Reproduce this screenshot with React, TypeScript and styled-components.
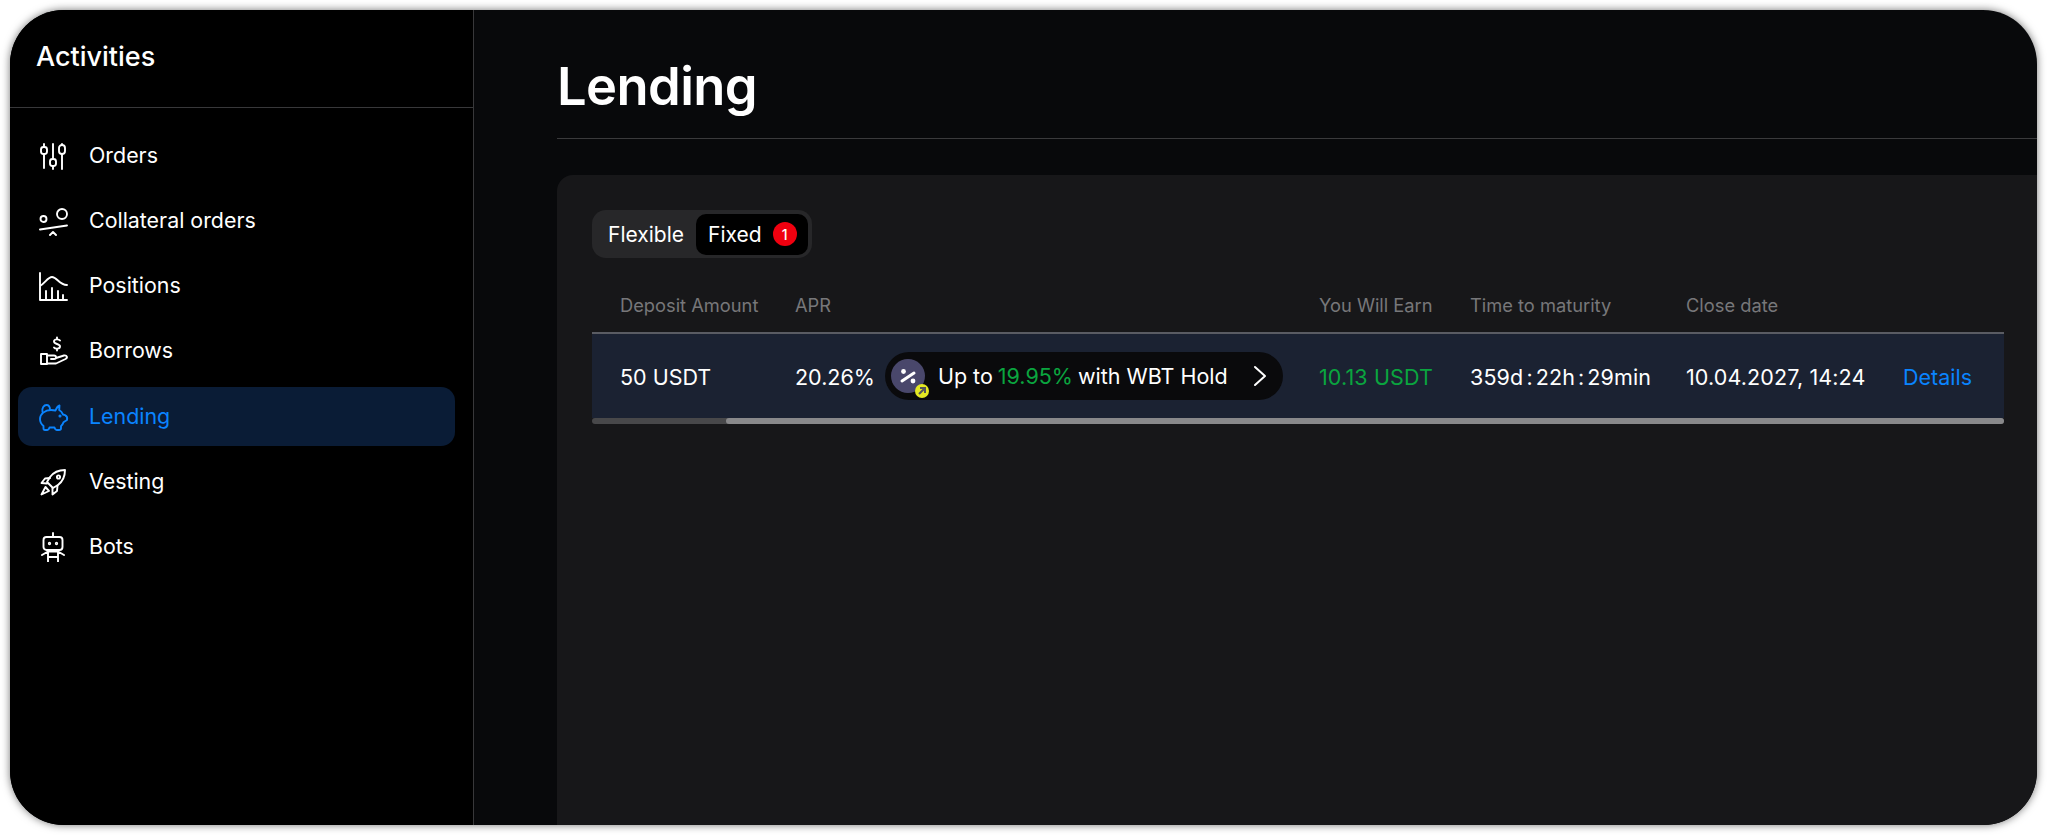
import React from "react";
import styled, { createGlobalStyle } from "styled-components";

const Global = createGlobalStyle`
  html, body { margin: 0; padding: 0; background: #fff; }
  body { font-family: Inter, "Liberation Sans", sans-serif; -webkit-font-smoothing: antialiased; }
  * { box-sizing: border-box; }
`;

const Page = styled.div`
  width: 2048px;
  height: 835px;
  padding: 10px 11px 10px 10px;
  overflow: hidden;
`;
const Frame = styled.div`
  display: flex;
  height: 100%;
  border-radius: 54px;
  overflow: hidden;
  background: #08090b;
  box-shadow: 0 0 9px rgba(0, 0, 0, 0.55);
`;
const Sidebar = styled.aside`
  width: 464px;
  flex: none;
  background: #000;
  border-right: 1px solid #38383a;
`;
const SidebarHead = styled.div`
  height: 98px;
  padding: 31px 0 0 26px;
  border-bottom: 1px solid #38383a;
  font-size: 27px;
  line-height: 32px;
  font-weight: 500;
  color: #fff;
`;
const Nav = styled.nav`
  display: flex;
  flex-direction: column;
  gap: 6.3px;
  padding: 18px 18px 0 8px;
`;
const NavItem = styled.div<{ $active?: boolean }>`
  display: flex;
  align-items: center;
  gap: 20px;
  height: 59px;
  padding-left: 21px;
  border-radius: 14px;
  font-size: 21.4px;
  color: ${(p) => (p.$active ? "#0a84ff" : "#fff")};
  background: ${(p) => (p.$active ? "#0a1c36" : "transparent")};
`;
const NavLabel = styled.span`
  padding-bottom: 2px;
`;
const IconSvg = styled.svg`
  width: 30px;
  height: 30px;
  flex: none;
  fill: none;
  stroke: currentColor;
  stroke-width: 1.9;
  stroke-linecap: round;
  stroke-linejoin: round;
`;
const Main = styled.main`
  flex: 1;
  min-width: 0;
  display: flex;
  flex-direction: column;
  padding-left: 83px;
`;
const TitleBar = styled.div`
  height: 129px;
  flex: none;
  padding-top: 44px;
  border-bottom: 1px solid #3a3a3c;
`;
const Title = styled.h1`
  margin: 0;
  font-size: 52.5px;
  line-height: 64px;
  font-weight: 600;
  letter-spacing: -0.6px;
  color: #fff;
`;
const Card = styled.section`
  flex: 1;
  margin-top: 36px;
  padding: 35px 33px 0 35px;
  background: #171719;
  border-top-left-radius: 16px;
`;
const Tabs = styled.div`
  display: inline-flex;
  align-items: center;
  height: 48px;
  padding: 0 4px 0 16px;
  border-radius: 14px;
  background: #272729;
`;
const TabPlain = styled.span`
  font-size: 21px;
  color: #fff;
  margin-right: 12px;
`;
const TabActive = styled.span`
  display: flex;
  align-items: center;
  gap: 11px;
  height: 41px;
  padding: 0 11px 0 12px;
  border-radius: 10px;
  background: #000;
  font-size: 21px;
  color: #fff;
`;
const Badge = styled.span`
  display: flex;
  align-items: center;
  justify-content: center;
  width: 24px;
  height: 24px;
  border-radius: 50%;
  background: #f0000f;
  font-size: 14px;
  font-weight: 500;
  color: #fff;
`;
const cols = "203px 524px 151px 216px 217px 101px";
const HeadRow = styled.div`
  display: grid;
  grid-template-columns: ${cols};
  align-items: center;
  height: 76px;
  padding-top: 19px;
  font-size: 18.3px;
  color: #77777a;
  border-bottom: 2px solid #5a5c63;
`;
const HeadCell = styled.div<{ $first?: boolean }>`
  padding-left: ${(p) => (p.$first ? "28px" : "0")};
`;
const Row = styled.div`
  display: grid;
  grid-template-columns: ${cols};
  align-items: center;
  height: 84px;
  background: #1b2232;
  font-size: 21.5px;
  color: #fff;
`;
const Cell = styled.div<{ $first?: boolean; $color?: string; $wide?: boolean }>`
  display: flex;
  align-items: center;
  padding-top: 2px;
  padding-left: ${(p) => (p.$first ? "28px" : "0")};
  color: ${(p) => p.$color || "inherit"};
  letter-spacing: ${(p) => (p.$wide ? "0.13px" : "0")};
  white-space: nowrap;
`;
const Pill = styled.div`
  display: flex;
  align-items: center;
  width: 398px;
  height: 48px;
  margin: -2px 0 0 10px;
  padding: 0 16px 0 6px;
  border-radius: 24px;
  background: #0a0a0c;
`;
const Coin = styled.span`
  position: relative;
  flex: none;
  width: 34px;
  height: 34px;
  margin-right: 13px;
  border-radius: 50%;
  background: #49476b;
  color: #fff;
  display: flex;
  align-items: center;
  justify-content: center;
`;
const CoinMark = styled.span`
  position: absolute;
  right: -4px;
  bottom: -5px;
  width: 14px;
  height: 14px;
  border-radius: 50%;
  background: #e4e823;
  display: flex;
  align-items: center;
  justify-content: center;
`;
const Green = styled.span`
  color: #0aa53f;
  margin: 0 5px;
`;
const Chevron = styled.svg`
  width: 14px;
  height: 22px;
  margin-left: auto;
  fill: none;
  stroke: #fff;
  stroke-width: 2;
  stroke-linecap: round;
  stroke-linejoin: round;
`;
const Sep = styled.span`
  margin: 0 3px;
`;
const Track = styled.div`
  display: flex;
  height: 6px;
  border-radius: 3px;
  background: #48484a;
`;
const Thumb = styled.div`
  flex: 1;
  margin-left: 134px;
  border-radius: 3px;
  background: #89898b;
`;

const Orders = () => (
  <IconSvg viewBox="0 0 30 30">
    <path d="M5 3v3M5 13v14M14 3v15M14 25v3M23 3v1M23 13v15" />
    <rect x="2" y="6" width="6" height="7" rx="2.5" />
    <rect x="11" y="18" width="6" height="7" rx="2.5" />
    <rect x="20" y="4" width="6" height="9" rx="3" />
  </IconSvg>
);
const Collateral = () => (
  <IconSvg viewBox="0 0 30 30">
    <circle cx="4.5" cy="13" r="3" />
    <circle cx="23" cy="8" r="5" />
    <path d="M1 23.5 28 19.5M11 29l3-3 3 3" />
  </IconSvg>
);
const Positions = () => (
  <IconSvg viewBox="0 0 30 30">
    <path d="M1 2v27h27M1 15c5-3 8-9 12-9 5 0 7 8 15 8M7 29V20M13 29V17M19 29V20M24 29v-5" />
  </IconSvg>
);
const Borrows = () => (
  <IconSvg viewBox="0 0 30 30">
    <path d="M21 4.500c-1-1.500-6-1.800-6 1 0 3 6 2 6 5 0 2.800-5 2.500-6 1M18 1.500v1M18 13v1.500" />
    <rect x="2" y="18" width="6" height="10" />
    <path d="M8 19.500h7c2.500 0 3 3.500 0 3.500h-3M17 22l8-2.500c3-.5 4 2 1.500 3.500L17 27.500H8" />
  </IconSvg>
);
const Pig = () => (
  <IconSvg viewBox="0 0 30 30">
    <path d="M20.500 3.500 20.200 8c1.800 1 3 2.700 3.800 4.500l2 .7c1.800.8 2.500 2.800 2 4.800l-3.500 2.200c-.5 1.700-1.500 3-2.500 4v2c0 1.300-1 1.800-2 1.800h-2c-1 0-2-1-2.500-2.500h-5c-.5 1.500-1.500 2.500-2.500 2.500H6c-1 0-1.500-.8-1.500-1.800v-2.200C2 22 1 19.500 1 17c0-5 5-9 11-9 1.600 0 3.300.2 4.500.5 1-2.500 2.500-4.500 4-5Z" />
    <path d="M3.500 10c-1-4 1.500-7 4-7 2 0 3.500 1.500 3.500 4.500" />
    <circle cx="21" cy="14" r=".6" />
  </IconSvg>
);
const Rocket = () => (
  <IconSvg viewBox="0 0 30 30">
    <path d="M26 3c-7 0-12 3-15 7l-3 5 6 6 5-3c4-3 7-8 7-15Z" />
    <path d="M11 11l-5 .5L2.500 16 8 16.500M18.500 18.500 18 24l-4.500 3.500L13.500 21M6.500 20 2.500 27.500 10 24Z" />
    <circle cx="19.500" cy="10" r="1.600" />
  </IconSvg>
);
const Bot = () => (
  <IconSvg viewBox="0 0 30 30">
    <path d="M14 1v4" />
    <rect x="4.500" y="5" width="19" height="13" rx="3" />
    <path d="M3 23l6-3.500h10L25 23M9 19.500V30M19 19.500V30M9 25h10" />
    <circle cx="10.500" cy="11.500" r=".7" />
    <circle cx="17.500" cy="11.500" r=".7" />
  </IconSvg>
);

const items: [string, React.FC, boolean?][] = [
  ["Orders", Orders],
  ["Collateral orders", Collateral],
  ["Positions", Positions],
  ["Borrows", Borrows],
  ["Lending", Pig, true],
  ["Vesting", Rocket],
  ["Bots", Bot],
];

const heads = ["Deposit Amount", "APR", "You Will Earn", "Time to maturity", "Close date", ""];

export default function App() {
  return (
    <Page>
      <Global />
      <Frame>
        <Sidebar>
          <SidebarHead>Activities</SidebarHead>
          <Nav>
            {items.map(([label, Icon, active]) => (
              <NavItem key={label} $active={active}>
                <Icon />
                <NavLabel>{label}</NavLabel>
              </NavItem>
            ))}
          </Nav>
        </Sidebar>
        <Main>
          <TitleBar>
            <Title>Lending</Title>
          </TitleBar>
          <Card>
            <Tabs>
              <TabPlain>Flexible</TabPlain>
              <TabActive>
                Fixed
                <Badge>1</Badge>
              </TabActive>
            </Tabs>
            <HeadRow>
              {heads.map((h, i) => (
                <HeadCell key={i} $first={i === 0}>
                  {h}
                </HeadCell>
              ))}
            </HeadRow>
            <Row>
              <Cell $first>50 USDT</Cell>
              <Cell>
                20.26%
                <Pill>
                  <Coin>
                    <svg width="20" height="20" viewBox="0 0 20 20" fill="#fff" stroke="#fff">
                      <path d="M4 15 16 7" strokeWidth="3" strokeLinecap="round" />
                      <circle cx="5.500" cy="5.500" r="2.400" stroke="none" />
                      <circle cx="15" cy="15" r="2.400" stroke="none" />
                    </svg>
                    <CoinMark>
                      <svg width="10" height="10" viewBox="0 0 10 10" fill="none" stroke="#55555a" strokeWidth="2">
                        <path d="M2 8 8 2M3 2h5v5" />
                      </svg>
                    </CoinMark>
                  </Coin>
                  Up to<Green>19.95%</Green>with WBT Hold
                  <Chevron viewBox="0 0 14 22">
                    <path d="M2 2l10 9-10 9" />
                  </Chevron>
                </Pill>
              </Cell>
              <Cell $color="#0aa53f" $wide>10.13 USDT</Cell>
              <Cell $wide>
                359d<Sep>:</Sep>22h<Sep>:</Sep>29min
              </Cell>
              <Cell $wide>10.04.2027, 14:24</Cell>
              <Cell $color="#0a84ff">Details</Cell>
            </Row>
            <Track>
              <Thumb />
            </Track>
          </Card>
        </Main>
      </Frame>
    </Page>
  );
}
